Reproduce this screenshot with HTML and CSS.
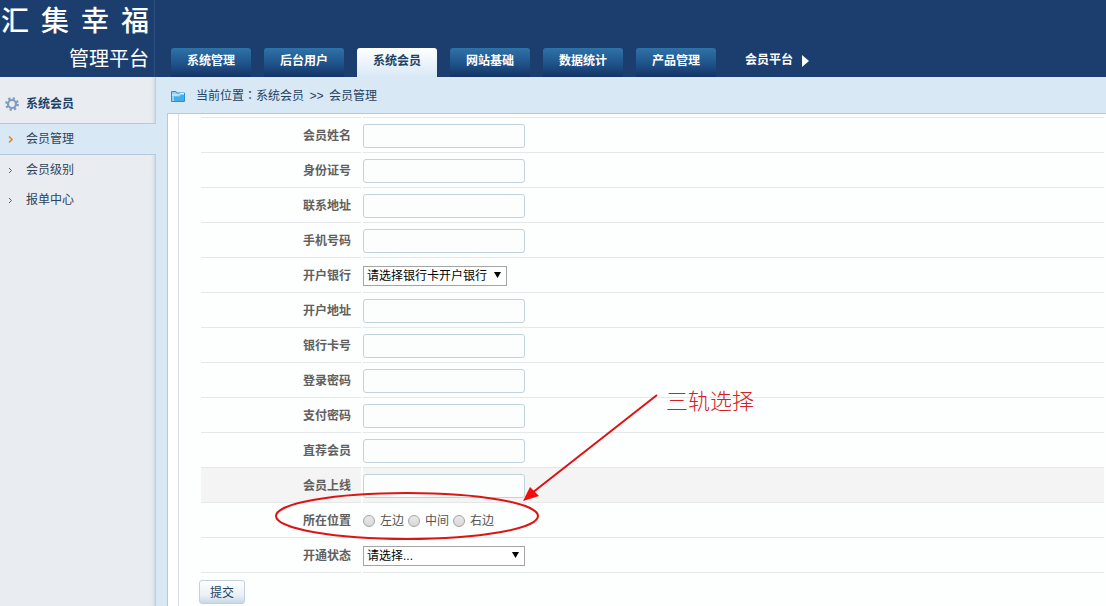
FILE: index.html
```html
<!DOCTYPE html>
<html lang="zh-CN">
<head>
    <meta charset="UTF-8">
    <meta name="viewport" content="width=device-width, initial-scale=1.0">
    <title>汇集幸福管理平台</title>
    <link rel="stylesheet" href="styles.css">
</head>
<body>

    <header class="header">
        <div class="logo">
            <div class="logo-name"><span>汇</span><span>集</span><span>幸</span><span>福</span></div>
            <div class="logo-sub">管理平台</div>
        </div>
        <nav class="nav">
            <a href="#">系统管理</a>
            <a href="#">后台用户</a>
            <a href="#" class="active">系统会员</a>
            <a href="#">网站基础</a>
            <a href="#">数据统计</a>
            <a href="#">产品管理</a>
            <a href="#" class="plain">会员平台
                <svg width="7" height="12" viewBox="0 0 7 12"><path d="M0 0L7 6L0 12Z" fill="#fff"/></svg>
            </a>
        </nav>
    </header>

    <div class="wrapper">
        <!-- Left menu -->
        <aside class="sidebar">
            <h2 class="menu-title">
                <svg width="14" height="14" viewBox="0 0 14 14" fill="none">
                    <circle cx="7" cy="7" r="5.7" stroke="#7f9cbc" stroke-width="2.4" stroke-dasharray="2.2 2.277"/>
                    <circle cx="7" cy="7" r="4" stroke="#7f9cbc" stroke-width="2.2"/>
                </svg>
                系统会员
            </h2>
            <ul class="menu">
                <li class="current"><a href="#"><svg width="5" height="7" viewBox="0 0 5 7"><path d="M1 .5L4 3.5L1 6.5" fill="none" stroke="#e08a2c" stroke-width="1.6"/></svg>会员管理</a></li>
                <li><a href="#"><svg width="5" height="7" viewBox="0 0 5 7"><path d="M1 1L3.5 3.5L1 6" fill="none" stroke="#56616e"/></svg>会员级别</a></li>
                <li><a href="#"><svg width="5" height="7" viewBox="0 0 5 7"><path d="M1 1L3.5 3.5L1 6" fill="none" stroke="#56616e"/></svg>报单中心</a></li>
            </ul>
        </aside>

        <main class="main">
            <div class="crumbs">
                <svg width="14" height="11" viewBox="0 0 14 11">
                    <path d="M.5 10.5V.5H5L6 2H13.5V10.5Z" fill="#8ed2f6" stroke="#2b8fd8"/>
                    <path d="M1 4H7.5L9 2.5H13" fill="none" stroke="#e2f6ff"/>
                    <path d="M3 10V5.5H8.5L10 4H13V10Z" fill="#45aee9"/>
                </svg>
                <div>当前位置<span class="colon" lang="zh-TW">：</span>系统会员 <span class="sep">&gt;&gt;</span> 会员管理</div>
            </div>

            <div class="panel">
                <form class="panel-inner">
                    <table class="form-table">
                        <tr><th><label for="name">会员姓名</label></th><td><input type="text" id="name"></td></tr>
                        <tr><th><label for="idcard">身份证号</label></th><td><input type="text" id="idcard"></td></tr>
                        <tr><th><label for="address">联系地址</label></th><td><input type="text" id="address"></td></tr>
                        <tr><th><label for="mobile">手机号码</label></th><td><input type="text" id="mobile"></td></tr>
                        <tr>
                            <th><label for="bank">开户银行</label></th>
                            <td>
                                <div class="select-box bank">
                                    <select id="bank"><option>请选择银行卡开户银行</option></select>
                                </div>
                            </td>
                        </tr>
                        <tr><th><label for="bankaddr">开户地址</label></th><td><input type="text" id="bankaddr"></td></tr>
                        <tr><th><label for="cardno">银行卡号</label></th><td><input type="text" id="cardno"></td></tr>
                        <tr><th><label for="loginpwd">登录密码</label></th><td><input type="password" id="loginpwd"></td></tr>
                        <tr><th><label for="paypwd">支付密码</label></th><td><input type="password" id="paypwd"></td></tr>
                        <tr><th><label for="referrer">直荐会员</label></th><td><input type="text" id="referrer"></td></tr>
                        <tr class="hover"><th><label for="upline">会员上线</label></th><td><input type="text" id="upline"></td></tr>
                        <tr>
                            <th>所在位置</th>
                            <td>
                                <div class="radios">
                                    <label><input type="radio" name="position" value="1">左边</label>
                                    <label><input type="radio" name="position" value="2">中间</label>
                                    <label><input type="radio" name="position" value="3">右边</label>
                                </div>
                            </td>
                        </tr>
                        <tr>
                            <th><label for="status">开通状态</label></th>
                            <td>
                                <div class="select-box status">
                                    <select id="status"><option>请选择...</option></select>
                                </div>
                            </td>
                        </tr>
                    </table>
                    <button type="button" class="submit">提交</button>
                </form>

                <!-- Note on the position field -->
                <svg class="note-mark" width="390" height="160" viewBox="0 0 390 160">
                    <ellipse cx="137" cy="131" rx="131" ry="23" fill="none" stroke="#dd1414" stroke-width="2"/>
                    <path d="M387 10L262 108" stroke="#e01010" stroke-width="2"/>
                    <path d="M253 116L260 102L269 111Z" fill="#f20d0d"/>
                </svg>
                <div class="note-text">三轨选择</div>
            </div>
        </main>
    </div>

</body>
</html>
```
FILE: styles.css
```css
* {
    box-sizing: border-box;
}

body {
    margin: 0;
    min-height: 100vh;
    display: flex;
    flex-direction: column;
    background: #d9e8f5;
    color: #555;
    font: 12px/18px "Liberation Sans", "Noto Sans CJK SC", sans-serif;
}

a {
    color: inherit;
    text-decoration: none;
}

svg {
    flex: none;
}

/* header */
.header {
    display: flex;
    height: 77px;
    background: #1b3e6e;
    color: #fff;
}

.logo {
    width: 155px;
    padding: 0 5px 0 1px;
    border-right: 1px solid #2c507f;
    font-family: "Noto Sans CJK SC", sans-serif;
}

.logo-name {
    display: flex;
    justify-content: space-between;
    font-size: 28px;
    line-height: 38px;
    font-weight: 500;
}

.logo-sub {
    padding-top: 5px;
    font-size: 20px;
    line-height: 30px;
    text-align: right;
}

.nav {
    display: flex;
    align-items: flex-end;
    gap: 13px;
    padding-left: 16px;
}

.nav a {
    width: 80px;
    height: 29px;
    border-radius: 3px 3px 0 0;
    background: linear-gradient(#2e73a7, #1f528a 55%, #153364);
    font-weight: bold;
    line-height: 27px;
    text-align: center;
    white-space: nowrap;
}

.nav a.active {
    background: linear-gradient(#fff, #d9e8f5);
    color: #1c4266;
}

.nav a.plain {
    display: flex;
    align-items: center;
    gap: 9px;
    width: auto;
    padding: 0 0 4px 16px;
    background: none;
}

.wrapper {
    display: flex;
    flex: 1;
}

/* left menu */
.sidebar {
    width: 156px;
    flex: none;
    background: linear-gradient(to right, #e9edf2 151px, #dce1e8 154px, #b9c8d8);
    color: #2f4358;
}

.menu-title {
    display: flex;
    align-items: center;
    gap: 7px;
    height: 46px;
    margin: 0;
    padding: 8px 0 0 5px;
    color: #1c4266;
    font-size: 12px;
}

.menu {
    margin: 0;
    padding: 0;
    list-style: none;
}

.menu a {
    display: flex;
    align-items: center;
    gap: 13px;
    height: 30px;
    padding-left: 8px;
}

.menu .current {
    border: 1px solid #b5c9dc;
    border-width: 1px 0;
    background: #d9e8f5;
}

/* content */
.main {
    display: flex;
    flex-direction: column;
    flex: 1;
    padding-left: 11px;
}

.crumbs {
    display: flex;
    align-items: center;
    gap: 11px;
    height: 36px;
    padding: 2px 0 0 4px;
    color: #24425f;
}

.crumbs .colon {
    font-family: "Noto Sans CJK TC", sans-serif;
}

.crumbs .sep {
    margin: 0 2px;
    font-family: "Liberation Mono", monospace;
}

.panel {
    position: relative;
    flex: 1;
    padding-left: 10px;
    border: 1px solid #bcc8d2;
    border-width: 1px 0 0 1px;
    background: #fff;
}

.panel-inner {
    height: 100%;
    padding: 3px 0 2px 20px;
    border-left: 1px solid #d9dfe5;
    background: #fdfefe;
}

.form-table {
    width: 100%;
    border-spacing: 2px 0;
}

.form-table th,
.form-table td {
    height: 35px;
    padding: 2px 0 0;
    border-bottom: 1px solid #e4e8ea;
}

.form-table tr:first-child th,
.form-table tr:first-child td {
    height: 36px;
    border-top: 1px solid #e4e8ea;
}

.form-table th {
    width: 160px;
    padding-right: 10px;
    color: #606060;
    text-align: right;
}

.form-table .hover {
    background: #f4f4f4;
}

.form-table input[type="text"],
.form-table input[type="password"] {
    display: block;
    width: 162px;
    height: 24px;
    padding: 0 4px;
    border: 1px solid #c3d3dc;
    border-radius: 3px;
    background: #fcfefe;
}

.select-box {
    position: relative;
}

.select-box.bank {
    width: 144px;
}

.select-box.status {
    width: 162px;
}

.select-box::after {
    content: "";
    position: absolute;
    top: 6px;
    right: 6px;
    width: 7px;
    height: 6px;
    background: #000;
    clip-path: polygon(0 0, 100% 0, 50% 100%);
    pointer-events: none;
}

.select-box select {
    display: block;
    width: 100%;
    height: 20px;
    padding: 0 3px;
    border: 1px solid #a5a5a5;
    border-radius: 0;
    background: #fff;
    color: #000;
    font: inherit;
    appearance: none;
}

.radios {
    display: flex;
    gap: 4px;
}

.radios label {
    display: flex;
    align-items: center;
    gap: 5px;
}

.radios input {
    width: 12px;
    height: 12px;
    margin: 0;
    border: 1px solid #a3a3a3;
    border-radius: 50%;
    background: linear-gradient(#e9e9e9, #d8d8d8);
    appearance: none;
}

.submit {
    display: block;
    width: 46px;
    height: 24px;
    margin-top: 7px;
    padding: 2px 0 0;
    border: 1px solid #c3d1dd;
    border-radius: 3px;
    background: linear-gradient(#fff, #e9f0f6 65%, #c8d8e6);
    color: #24425f;
    font: inherit;
}

.note-mark {
    position: absolute;
    top: 271px;
    left: 102px;
    pointer-events: none;
}

.note-text {
    position: absolute;
    top: 273px;
    left: 498px;
    color: #d42020;
    font-size: 22px;
    font-weight: 300;
    line-height: 30px;
}
```
